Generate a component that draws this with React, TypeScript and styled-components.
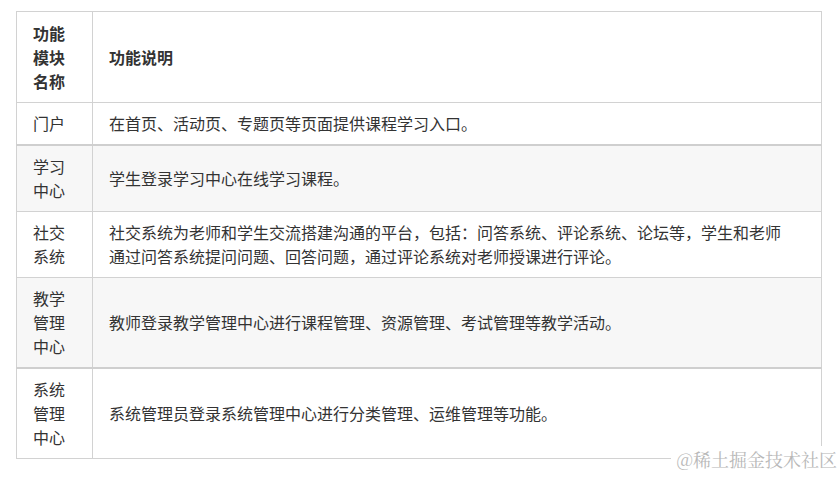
import styled, { createGlobalStyle } from "styled-components";

const rows = [
  { name: ["门户"], desc: "在首页、活动页、专题页等页面提供课程学习入口。" },
  { name: ["学习", "中心"], desc: "学生登录学习中心在线学习课程。", shaded: true, thick: true },
  {
    name: ["社交", "系统"],
    desc: "社交系统为老师和学生交流搭建沟通的平台，包括：问答系统、评论系统、论坛等，学生和老师通过问答系统提问问题、回答问题，通过评论系统对老师授课进行评论。",
  },
  { name: ["教学", "管理", "中心"], desc: "教师登录教学管理中心进行课程管理、资源管理、考试管理等教学活动。", shaded: true },
  { name: ["系统", "管理", "中心"], desc: "系统管理员登录系统管理中心进行分类管理、运维管理等功能。", thick: true },
];

export default function App() {
  return (
    <Page>
      <GlobalStyle />
      <Table>
        <colgroup>
          <col style={{ width: 76 }} />
          <col />
        </colgroup>
        <thead>
          <tr>
            <HeadCell>
              功能
              <br />
              模块
              <br />
              名称
            </HeadCell>
            <HeadCell $wide>功能说明</HeadCell>
          </tr>
        </thead>
        <tbody>
          {rows.map((r) => (
            <Row key={r.desc} $shaded={r.shaded} $thick={r.thick}>
              <Cell>
                {r.name.map((n, i) => (
                  <span key={n + i}>
                    {i > 0 && <br />}
                    {n}
                  </span>
                ))}
              </Cell>
              <Cell $wide>{r.desc}</Cell>
            </Row>
          ))}
        </tbody>
      </Table>
      <Watermark>@稀土掘金技术社区</Watermark>
    </Page>
  );
}

const GlobalStyle = createGlobalStyle`
  body {
    margin: 0;
    background: #fff;
    font-family: "Noto Sans CJK SC", "Noto Sans", sans-serif;
  }
`;

const Page = styled.div`
  position: relative;
  width: 840px;
  height: 477px;
  padding: 11px 18px 0 16px;
  box-sizing: border-box;
  overflow: hidden;
`;

const Table = styled.table`
  width: 806px;
  border-collapse: collapse;
  table-layout: fixed;
  font-size: 16px;
  line-height: 24px;
  color: #333;
`;

const HeadCell = styled.th<{ $wide?: boolean }>`
  border: 1px solid #d2d2d2;
  padding: 9px ${(p) => (p.$wide ? "28px" : "8px")} 9px 16px;
  text-align: left;
  vertical-align: middle;
  font-weight: 700;
  color: #333;
`;

const Row = styled.tr<{ $shaded?: boolean; $thick?: boolean }>`
  background: ${(p) => (p.$shaded ? "#f7f7f7" : "#fff")};

  td {
    border-top: ${(p) => (p.$thick ? "2px solid #cfcfcf" : "1px solid #d2d2d2")};
  }
`;

const Cell = styled.td<{ $wide?: boolean }>`
  border: 1px solid #d2d2d2;
  padding: 8px ${(p) => (p.$wide ? "28px" : "8px")} 9px 16px;
  vertical-align: middle;
  font-weight: 400;
`;

const Watermark = styled.div`
  position: absolute;
  right: 3px;
  bottom: 5px;
  padding: 2px 0 2px 6px;
  background: #fff;
  font-size: 18px;
  line-height: 22px;
  color: #b8b8b8;
  font-family: "Noto Serif CJK SC", "Noto Sans CJK SC", serif;
`;
